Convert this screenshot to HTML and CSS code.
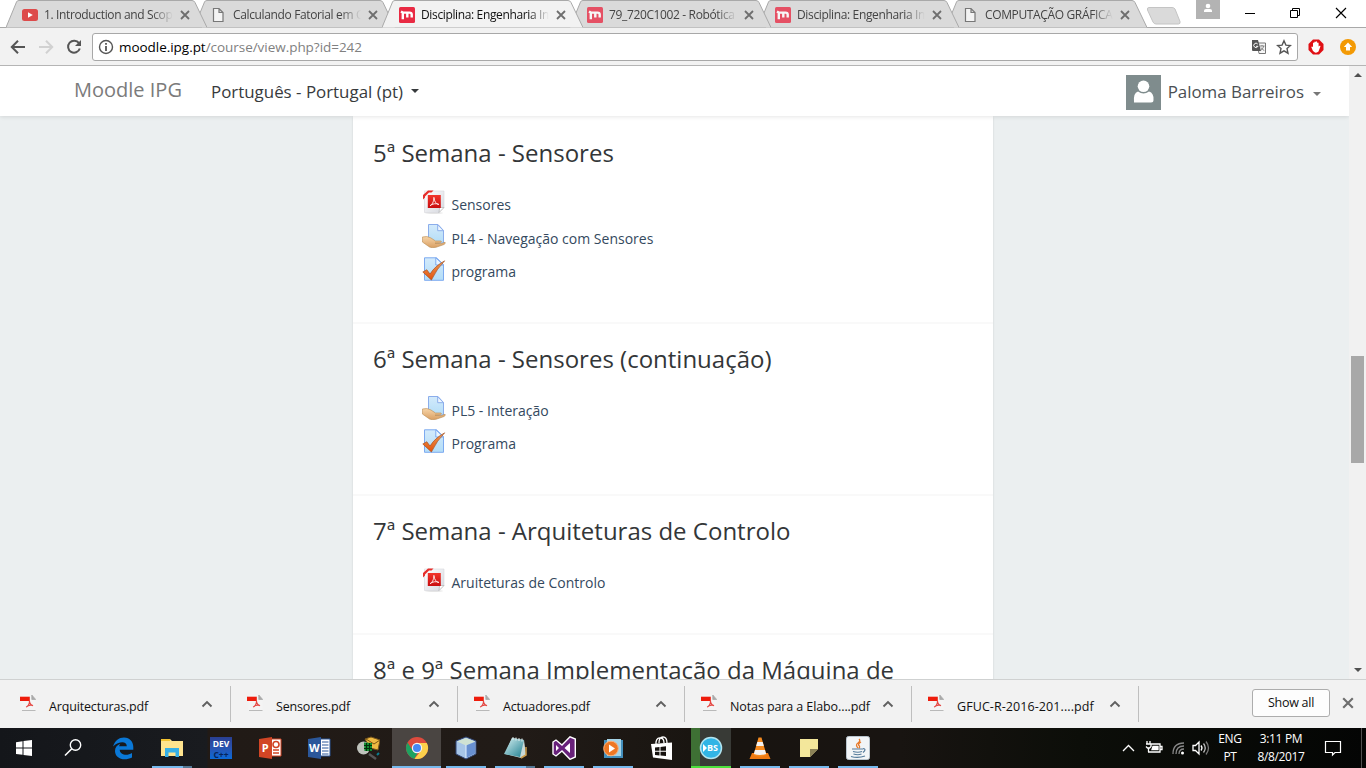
FILE: index.html
```html
<!DOCTYPE html>
<html lang="pt">
<head>
<meta charset="utf-8">
<title>Disciplina: Engenharia</title>
<link rel="stylesheet" href="styles.css">
</head>
<body>
<svg class="defs" width="0" height="0">
  <defs>
    <linearGradient id="paper" x1="0" y1="0" x2="1" y2="1"><stop offset="0" stop-color="#fff"/><stop offset="1" stop-color="#d6d8df"/></linearGradient>
    <linearGradient id="blue" x1="0" y1="0" x2="0" y2="1"><stop offset="0" stop-color="#d3eafb"/><stop offset="1" stop-color="#b3ddf7"/></linearGradient>
    <linearGradient id="skin" x1="0" y1="0" x2="0" y2="1"><stop offset="0" stop-color="#f7d5a8"/><stop offset="1" stop-color="#d99f63"/></linearGradient>
    <linearGradient id="red" x1="0" y1="0" x2="0" y2="1"><stop offset="0" stop-color="#f2352b"/><stop offset="1" stop-color="#c80d10"/></linearGradient>
    <linearGradient id="orange" x1="0" y1="0" x2="0" y2="1"><stop offset="0" stop-color="#ed9a55"/><stop offset="1" stop-color="#e2520c"/></linearGradient>
    <linearGradient id="glass" x1="0" y1="0" x2="1" y2="1"><stop offset="0" stop-color="#d9f2f3"/><stop offset="1" stop-color="#1e7f90"/></linearGradient>
    <linearGradient id="devbg" x1="0" y1="0" x2="0" y2="1"><stop offset="0" stop-color="#2a3f92"/><stop offset=".5" stop-color="#2a53b0"/><stop offset="1" stop-color="#0b6ad8"/></linearGradient>
  </defs>
  <symbol id="tab" viewBox="0 0 201 28"><path d="M0 27.500L10.500 2Q11 .5 13 .5H186Q188 .5 189 2.500L201 27.500" stroke="#a9a9a9"/></symbol>
  <symbol id="x" viewBox="0 0 10 10"><path d="M1 1L9 9M9 1L1 9" fill="none" stroke="#6e6e6e" stroke-width="1.8"/></symbol>
  <symbol id="yt" viewBox="0 0 16 16"><rect y="2" width="16" height="12" rx="2.5" fill="#dd4b4b"/><path d="M6 5.3L10.8 8L6 10.7z" fill="#fff"/></symbol>
  <symbol id="page" viewBox="0 0 16 16"><path d="M3.5 1.5H9L13 5.5V14.5H3.5zM9 1.5V5.5H13" fill="#f3f3f3" stroke="#777" stroke-width="1.2"/></symbol>
  <symbol id="m" viewBox="0 0 16 16"><rect width="16" height="16" rx="1.5" fill="#e92a43"/><path d="M3.8 12.300V5.600H10.500Q12.700 5.600 12.700 7.600V10.600M8.300 6V10.600M3.800 5.600L2 4.500" fill="none" stroke="#fff" stroke-width="2.400"/></symbol>
  <symbol id="pdf" viewBox="0 0 24 24"><ellipse cx="12" cy="23" rx="9" ry=".8" fill="#ddd"/><path d="M2.5 1H22V17.5L17 22.5H2.5z" fill="url(#paper)" stroke="#d6d6dc" stroke-width=".6"/><path d="M22 17.5H18.5Q17.5 17.5 17.5 18.5L17 22.5z" fill="#fff" stroke="#aaa" stroke-width=".6"/><path d="M1 9.5V5L6 .5H11.5L9.5 2.5H7L3 6.5V7.5z" fill="#e62e2b"/><rect x="5.8" y="5" width="13" height="13" fill="url(#red)"/><path d="M8 15.7C10 15 12 11.5 11.9 7.4C12.4 11.7 14 14.1 17 14.5C14.2 13 10.3 13.7 8 15.7z" fill="none" stroke="#ffe5e5"/></symbol>
  <symbol id="assign" viewBox="0 0 24 24"><path d="M6.500 .5H16L21.500 6.500V19H6.500z" fill="url(#blue)" stroke="#8badeb"/><path d="M15.7 .8V6.7H21.5z" fill="#f0f8ff" stroke="#8badeb"/><path d="M.4 13Q5 11.5 9 14L13.5 17H19Q20 18 18.5 18.8L13 19.2L19 19.7L23 18.3Q24 19.2 22 20.5L14 23.3Q10 24.3 7.5 23L.4 18z" fill="url(#skin)" stroke="#b8894f" stroke-width=".6"/></symbol>
  <symbol id="check" viewBox="0 0 24 24"><path d="M2.5 .8H14.5L21.5 7.5V23.3H2.5z" fill="url(#blue)" stroke="#7daaf0"/><path d="M13.8 .8V8H21.5z" fill="#e9f5ff" stroke="#7daaf0"/><path d="M.8 15L4.8 12.7L8 17Q13 9 22.7 3.8Q15 11.5 9.4 23z" fill="url(#orange)" stroke="#9e430f" stroke-width=".6"/></symbol>
  <symbol id="dlpdf" viewBox="0 0 16 16"><path d="M1.5 0H11.5L15.5 4V15.5H1.5z" fill="#f4f4f4"/><path d="M2 15.5H15.5M11.8 0V4.5H15.7z" fill="#aaa" stroke="#aaa" stroke-width=".8"/><path d="M0 1.7H9.8V6H0z" fill="#ee1c0c"/><path d="M6.2 12.1C8.3 11.3 9.8 8.2 9.4 5.6C9.6 8 11 10.2 13 10.6C11 9.8 8 10.2 6.2 12.1z" fill="none" stroke="#e44743" stroke-width="1.1"/></symbol>
  <symbol id="up" viewBox="0 0 12 8"><path d="M1.5 6.5L6 2L10.5 6.5" fill="none" stroke="#606060" stroke-width="1.9"/></symbol>
</svg>
<div class="screen">
  <header class="tabs">
    <div class="tab z6"><svg class="shape"><use href="#tab"/></svg><svg class="fav"><use href="#yt"/></svg><span class="title t1">1. Introduction and Scope</span><svg class="close"><use href="#x"/></svg></div>
    <div class="tab z5"><svg class="shape"><use href="#tab"/></svg><svg class="fav"><use href="#page"/></svg><span class="title">Calculando Fatorial em C</span><svg class="close"><use href="#x"/></svg></div>
    <div class="tab active"><svg class="shape"><use href="#tab"/></svg><svg class="fav mfav"><use href="#m"/></svg><span class="title">Disciplina: Engenharia Inf</span><svg class="close"><use href="#x"/></svg></div>
    <div class="tab z4"><svg class="shape"><use href="#tab"/></svg><svg class="fav mfav pale"><use href="#m"/></svg><span class="title">79_720C1002 - Robótica</span><svg class="close"><use href="#x"/></svg></div>
    <div class="tab z3"><svg class="shape"><use href="#tab"/></svg><svg class="fav mfav pale"><use href="#m"/></svg><span class="title">Disciplina: Engenharia Inf</span><svg class="close"><use href="#x"/></svg></div>
    <div class="tab z2"><svg class="shape"><use href="#tab"/></svg><svg class="fav"><use href="#page"/></svg><span class="title">COMPUTAÇÃO GRÁFICA</span><svg class="close"><use href="#x"/></svg></div>
    <svg class="newtab" viewBox="0 0 36 20"><path d="M3 .5H26Q28 .5 29 2L34 14.500Q34.500 17 32.500 17H10Q8 17 7 15L1.500 3Q.8.5 3 .5z" fill="#dadada" stroke="#c4c4c4"/></svg>
    <svg class="wincontrols" viewBox="0 0 170 28"><path d="M0 0H24V19H0z" fill="#b3b3b3"/><circle cx="12" cy="6" r="2.300" fill="#fff"/><path d="M8 12V10.500Q8 9 10 9H14Q16 9 16 10.500V12z" fill="#fff"/><g fill="none" stroke="#000"><path d="M49 13.500H59M94.500 10.500H101.500V17.500H94.500zM96.500 10V8.500H103.500V15.500H102"/><path d="M140 8L150 18M150 8L140 18" stroke-width="1.150"/></g></svg>
  </header>
  <div class="toolbar">
    <svg class="navicons" viewBox="0 0 92 37"><g fill="none" stroke="#555" stroke-width="2"><path d="M25 19H12.500M18 12.800L11.800 19L18 25.200"/><path stroke="#d1d1d1" d="M39 19H51.500M46 12.800L52.200 19L46 25.200"/><path d="M79 15.200A6 6 0 1 0 79.800 20.500"/></g><path d="M81 12V18H75z" fill="#555"/></svg>
    <div class="omnibox">
      <svg class="info" viewBox="0 0 16 16"><circle cx="8" cy="8" r="6.500" fill="none" stroke="#555" stroke-width="1.400"/><path d="M8 7V12M8 4V5.800" stroke="#555" stroke-width="1.800"/></svg>
      <span class="url"><b>moodle.ipg.pt</b>/course/view.php?id=242</span>
      <svg class="translate" viewBox="0 0 16 16"><path d="M6 4H14.500V14.500H8z" fill="#f8f8f8" stroke="#777"/><path d="M1 1H7L10 12H2Q1 12 1 11z" fill="#555"/><path d="M6.700 5A2.200 2.200 0 1 0 7 7.300H5" fill="none" stroke="#fff"/><path d="M9 7H13.500M11 6V7M12.800 7Q12 10 9.700 11.500M10 8.500Q11.500 11 13.300 11.500" fill="none" stroke="#777" stroke-width=".9"/></svg>
      <svg class="star" viewBox="0 0 16 16"><path d="M8 1.800L9.900 6.100L14.500 6.500L11 9.600L12 14.200L8 11.800L4 14.200L5 9.600L1.500 6.500L6.100 6.100z" fill="none" stroke="#555" stroke-width="1.400"/></svg>
    </div>
    <svg class="ext1" viewBox="0 0 16 16"><path d="M5 .5H11L15.500 5V11L11 15.500H5L.5 11V5z" fill="#e00f14"/><path d="M5 12L3.400 8.500Q3.400 7 5 8V4Q5.700 3 6.300 4V3Q7 2 7.700 3V2.700Q8.500 1.700 9.200 3V4Q10.300 3 10.600 4.300V7.500L12 6.500Q13 7 12 8.500L10.500 12.500Q9 14 7 13.500z" fill="#fff"/></svg>
    <svg class="ext2" viewBox="0 0 16 16"><circle cx="8" cy="8" r="8" fill="#f39a05"/><path d="M8 3.500L12.200 8H10V11.500H6V8H3.800z" fill="#fff"/></svg>
  </div>
  <div class="viewport">
    <main class="site">
      <nav class="navbar">
        <span class="brand">Moodle IPG</span><span class="lang">Português - Portugal (pt)</span><i class="caret"></i>
        <div class="user"><svg class="avatar" viewBox="0 0 35 35"><rect width="35" height="35" fill="#7f8c8d"/><circle cx="17.500" cy="11.300" r="5.800" fill="#fff"/><path d="M8 27.500Q7 18 12 16.500Q17.500 20.500 23 16.500Q28 18 27.500 25Q27.500 27.500 25 27.500z" fill="#fff"/></svg><span class="username">Paloma Barreiros</span><i class="caret grey"></i></div>
      </nav>
      <div class="course">
        <section><h3>5ª Semana - Sensores</h3><ul>
          <li><svg><use href="#pdf"/></svg><a>Sensores</a></li>
          <li><svg><use href="#assign"/></svg><a>PL4 - Navegação com Sensores</a></li>
          <li><svg><use href="#check"/></svg><a>programa</a></li></ul></section>
        <section><h3>6ª Semana - Sensores (continuação)</h3><ul>
          <li><svg><use href="#assign"/></svg><a>PL5 - Interação</a></li>
          <li><svg><use href="#check"/></svg><a>Programa</a></li></ul></section>
        <section><h3>7ª Semana - Arquiteturas de Controlo</h3><ul>
          <li><svg><use href="#pdf"/></svg><a>Aruiteturas de Controlo</a></li></ul></section>
        <section><h3>8ª e 9ª Semana Implementação da Máquina de</h3></section>
      </div>
    </main>
    <div class="scrollbar"><i class="arrow upw"></i><i class="thumb"></i><i class="arrow down"></i></div>
  </div>
  <div class="downloads">
    <div class="dl"><svg class="file"><use href="#dlpdf"/></svg><span>Arquitecturas.pdf</span><svg class="chev"><use href="#up"/></svg></div>
    <div class="dl"><svg class="file"><use href="#dlpdf"/></svg><span>Sensores.pdf</span><svg class="chev"><use href="#up"/></svg></div>
    <div class="dl"><svg class="file"><use href="#dlpdf"/></svg><span>Actuadores.pdf</span><svg class="chev"><use href="#up"/></svg></div>
    <div class="dl"><svg class="file"><use href="#dlpdf"/></svg><span class="d4">Notas para a Elabo....pdf</span><svg class="chev"><use href="#up"/></svg></div>
    <div class="dl"><svg class="file"><use href="#dlpdf"/></svg><span class="d5">GFUC-R-2016-201....pdf</span><svg class="chev"><use href="#up"/></svg></div>
    <button class="showall">Show all</button><svg class="dlclose" viewBox="0 0 10 10"><use href="#x"/></svg>
  </div>
  <footer class="taskbar">
    <div class="app"><svg class="nudge" viewBox="0 0 24 24"><path d="M4 6.200L10.500 5.300V11.500H4zM11.500 5.100L20 4V11.500H11.500zM4 12.500H10.500V18.800L4 17.900zM11.500 12.500H20V20L11.500 19z" fill="#fff"/></svg></div>
    <div class="app"><svg class="nudge" viewBox="0 0 24 24"><circle cx="14.500" cy="9" r="5.200" fill="none" stroke="#fff" stroke-width="1.400"/><path d="M10.800 12.700L4 19.500" stroke="#fff" stroke-width="1.600"/></svg></div>
    <div class="app"><svg viewBox="0 0 24 24"><path d="M2 10.500C4 4.500 8 1.500 13 1.500C19 1.500 22.300 6 22.300 11V13.800H8.700C9 19 16 20.300 21 17V21.500C13 25.500 4 22.500 4 15C4 11.500 6 9 9.300 7.700C8.500 8.700 8.300 9.600 8.200 10.200H15.800C15.800 5 8 5 2 10.500z" fill="#0a78d7"/></svg></div>
    <div class="app run split"><svg viewBox="0 0 24 24"><path d="M1 3H10L12 5H23V20H1z" fill="#ffe48e"/><path d="M1 3H10V5H1z" fill="#f3c331"/><path d="M5 21V12H19V21H15.500V16.500H8.500V21z" fill="#37b0e6"/></svg></div>
    <div class="app"><svg viewBox="0 0 24 24"><rect x="1" y="1" width="22" height="22" fill="url(#devbg)"/><text x="12" y="10.500" class="devtxt" fill="#fff">DEV</text><text x="12" y="21.500" class="devtxt" fill="#06245b">C++</text></svg></div>
    <div class="app"><svg viewBox="0 0 24 24"><path d="M13 3H23V20H13z" fill="#fff" stroke="#d14525"/><path d="M15 14H21M15 17H21" stroke="#d14525" stroke-width="1.500"/><circle cx="18" cy="8.500" r="3" fill="none" stroke="#d14525" stroke-width="1.600"/><path d="M1 3L14 1V23L1 21z" fill="#d14525"/><text x="7.300" y="16" class="officetxt">P</text></svg></div>
    <div class="app"><svg viewBox="0 0 24 24"><path d="M13 3H23V20H13z" fill="#fff" stroke="#2b579a"/><path d="M15 6H21.500M15 9H21.500M15 12H21.500M15 15H21.500M15 18H21.500" stroke="#2b579a"/><path d="M1 3L14 1V23L1 21z" fill="#2b579a"/><text x="7.300" y="16" class="officetxt">W</text></svg></div>
    <div class="app"><svg viewBox="0 0 24 24"><path d="M9 3L15 1L24 4L22 14L14 12z" fill="#efb942" stroke="#75541a"/><path d="M10 3L18 8L24 4" fill="none" stroke="#7a5412"/><circle cx="7.500" cy="12" r="6.500" fill="#bfc2bc"/><path d="M8 6.500L16 7V15H8.500z" fill="#118b30"/><path d="M10.500 7V15M13.500 7V15M8 9.500H16M8 12.500H16" stroke="#042e0a"/><path d="M13 18L20 23" stroke="#555" stroke-width="2.500"/><path d="M21 19L23 17" stroke="#0b7e91" stroke-width="2"/></svg></div>
    <div class="app current"><svg viewBox="0 0 24 24"><circle cx="12" cy="12" r="11" fill="#dd4b3e"/><path d="M2.500 6.500L8 15Q10 17 12.500 17L9.500 22.700A11 11 0 0 1 2.500 6.500z" fill="#1da261"/><path d="M12 7H21.800A11 11 0 0 1 9.500 22.700L16.300 14.500z" fill="#fcd04b"/><circle cx="12" cy="12" r="5.200" fill="#f5f5f5"/><circle cx="12" cy="12" r="4" fill="#4688f4"/></svg></div>
    <div class="app run"><svg viewBox="0 0 24 24"><path d="M2 5L12 1L22 5V18L12 23L2 18z" fill="#a7c5e7" stroke="#314574"/><path d="M3 5.500L12 9.500L21 5.500L12 2z" fill="#d0e2d3"/><path d="M12 9.500V22L21 17.500V6z" fill="#6890d0"/><path d="M12 9V22" stroke="#e0efff"/></svg></div>
    <div class="app run split"><svg viewBox="0 0 24 24"><path d="M9 2L21 4L23 19L18 22L2 18z" fill="#c8d9d8"/><path d="M9 2L21 4L17 21L1 18z" fill="url(#glass)"/><path d="M10 1V4M13 1.500V4.500M16 2V5M19 2.500V5.500" stroke="#e4eeee"/><path d="M23 11V19L18 22" stroke="#cc9d4b" stroke-width="1.500" fill="none"/></svg></div>
    <div class="app run"><svg viewBox="0 0 24 24"><path d="M1 6L4 4L10 9L18 .8L23.300 3V21L18 23.300L10 15L4 20L1 18z" fill="#68217a" stroke="#fff" stroke-width="1.400"/><path d="M4 9V15L7 12zM18 7L12.500 12L18 17z" fill="#fff"/></svg></div>
    <div class="app run"><svg viewBox="0 0 24 24"><path d="M3 4H22V22H3z" fill="#438fbc"/><path d="M6 3H20V20H6z" fill="#a5d3e6"/><circle cx="10" cy="12.500" r="7.300" fill="#ee7723" stroke="#f6b27f"/><path d="M8 8.500L14 12.500L8 16.500z" fill="#fff"/></svg></div>
    <div class="app"><svg viewBox="0 0 24 24"><path d="M1 8L22 6.500V24L3 21.500z" fill="#fff"/><path d="M6 9V6Q7 1 11 2Q14 2.500 14 7M9 7Q9 .8 13 .8Q17 1 17 7" fill="none" stroke="#fff" stroke-width="1.300"/><path d="M5 11.500L9.500 11V14.800H5zM10.500 10.900L16 10.300V14.800H10.500zM5 15.800H9.500V19.400L5 19zM10.500 15.800H16V20L10.500 19.500z" fill="#16120f"/></svg></div>
    <div class="app green"><svg viewBox="0 0 24 24"><circle cx="12" cy="12" r="10.500" fill="#31b4e5" stroke="#b1e3ef" stroke-width="1.500"/><path d="M4 8L8 12L4 16" fill="#fff"/><text x="13.500" y="15.300" class="bstxt">BS</text></svg></div>
    <div class="app run"><svg viewBox="0 0 24 24"><path d="M4 17H20L22.500 23H1.500z" fill="#ee7911"/><path d="M10.500 1.500H13.500L18.500 19Q12 22 5.500 19z" fill="#f58b20"/><path d="M9.300 6H14.700L15.800 10H8.200zM7 14H17L18.100 18Q12 20 5.900 18z" fill="#f2f2f2"/></svg></div>
    <div class="app run"><svg viewBox="0 0 24 24"><path d="M3 3H21V13L13 21H3z" fill="#f3e79b"/><path d="M13 13H21L13 21z" fill="#8b8257"/></svg></div>
    <div class="app run"><svg viewBox="0 0 24 24"><rect x=".5" y=".5" width="23" height="23" rx="2" fill="#f2f5f7" stroke="#b9c5ce"/><path d="M13 3Q15 5 12 7Q9 9 12 12M15 6Q11 8.500 13.500 10Q14 11 13 12.500" fill="none" stroke="#e7792a" stroke-width="1.300"/><path d="M6 13H17M7 15.500Q12 17 16 15.500M7.500 18Q12 19.500 15.500 18M5 20.500Q12 22.500 19 20M17 12.500Q21 13 17 16.500" fill="none" stroke="#547b9b" stroke-width="1.200"/></svg></div>
    <div class="tray">
      <svg class="trayicons" viewBox="0 0 88 24"><g fill="none" stroke="#fff" stroke-width="1.300"><path d="M1 15L6.500 9.500L12 15"/><path d="M28 8H38V16H26M38.500 10.500H40V13.500H38.500M25 5V8M28 5V8M24 8H29V10.500L27.500 12H25.500L24 10.500M26.500 12V16"/><path d="M31 10.500H36V13.500H30z" fill="#fff"/><path stroke="#888" d="M51 18Q51 7 62 7M54 18Q54 10 62 10M57 18Q57 13 62 13"/><path d="M71 9.500H73.500L77 6V18L73.500 14.500H71zM79 9.500Q81 12 79 14.500"/><path d="M81.500 7.500Q85 12 81.500 16.500" stroke="#bbb"/><path d="M84 5.500Q89 12 84 18.500" stroke="#777"/></g><circle cx="60.500" cy="17" r="1.500" fill="#fff"/></svg>
      <div class="lang2">ENG<br>PT</div>
      <div class="clock">3:11 PM<br>8/8/2017</div>
      <svg class="note" viewBox="0 0 18 18"><path d="M1.500 2.500H16.500V13.500H11L8.500 16V13.500H1.500z" fill="none" stroke="#fff" stroke-width="1.200"/></svg>
    </div>
  </footer>
</div>
</body>
</html>
```
FILE: styles.css
```css
* { box-sizing: border-box; }
body { margin: 0; overflow: hidden; font-family: "Open Sans", "Noto Sans", sans-serif; }
.defs { position: absolute; }
.screen { width: 1366px; height: 768px; display: flex; flex-direction: column; background: #fff; }
svg { flex: none; display: block; }

.tabs { height: 28px; flex: none; display: flex; padding-left: 6px; background: #fff; box-shadow: inset 0 -1px #a9a9a9; isolation: isolate; }
.tab { position: relative; width: 201px; height: 28px; margin-right: -13px; padding: 2px 0 0 16px; display: flex; align-items: center; flex: none; border-bottom: 1px solid #a9a9a9; border-image: linear-gradient(90deg, transparent 6px, #a9a9a9 6px, #a9a9a9 195px, transparent 195px) 1; }
.shape { position: absolute; left: 0; top: 0; width: 201px; height: 28px; fill: #dadada; z-index: -1; }
.z6 { z-index: 6; }
.z5 { z-index: 5; }
.z4 { z-index: 4; }
.z3 { z-index: 3; }
.z2 { z-index: 2; }
.active { z-index: 9; border-bottom-color: transparent; border-image: none; }
.active .shape { fill: #f2f2f2; }
.fav { position: relative; width: 16px; height: 16px; margin-right: 7px; }
.mfav { margin: 0 6px 0 1px; }
.pale { opacity: .78; }
.title { width: 128px; overflow: hidden; white-space: nowrap; font-size: 12px; line-height: 18px; letter-spacing: -.36px; color: #444; -webkit-mask-image: linear-gradient(90deg, #000 84%, transparent); mask-image: linear-gradient(90deg, #000 84%, transparent); }
.t1 { margin-left: -1px; width: 129px; }
.active .title { color: #111; }
.close { width: 10px; height: 10px; margin-left: 7px; }
.newtab { width: 36px; height: 20px; margin: 7px 0 0 12px; }
.wincontrols { width: 170px; height: 28px; margin-left: 14px; }

.toolbar { height: 38px; flex: none; display: flex; align-items: flex-start; background: #f2f2f2; border-bottom: 1px solid #b5b5b5; }
.navicons { width: 92px; height: 37px; }
.omnibox { width: 1206px; height: 28px; margin-top: 5px; padding: 0 5px; display: flex; align-items: center; background: #fff; border: 1px solid #a8a8a8; border-radius: 3px; }
.info { width: 16px; height: 16px; margin-right: 5px; }
.url { flex: 1; font-size: 13.5px; line-height: 26px; letter-spacing: -.04px; color: #808080; }
.url b { font-weight: 400; color: #000; }
.translate { width: 16px; height: 16px; margin-right: 9px; }
.star { width: 16px; height: 16px; }
.ext1 { width: 16px; height: 16px; margin: 11px 16px 0 10px; }
.ext2 { width: 16px; height: 16px; margin-top: 11px; }

.viewport { height: 613px; flex: none; display: flex; overflow: hidden; }
.site { width: 1349px; height: 613px; overflow: hidden; background: #ebeff0; }
.navbar { position: relative; height: 50px; display: flex; align-items: center; padding: 0 28px 0 74px; background: #fff; box-shadow: 0 1px 4px rgba(0,0,0,.1); }
.brand { width: 137px; font-size: 20px; line-height: 48px; margin-top: -3px; color: #7b7b7b; }
.lang { font-size: 16.9px; color: #373a3c; }
.caret { margin-left: 8px; border: 4px solid transparent; border-top-color: #373a3c; border-bottom: 0; }
.grey { border-top-color: #777; margin: 3px 0 0 9px; }
.user { display: flex; align-items: center; margin-left: auto; padding-top: 3px; }
.avatar { width: 35px; height: 35px; margin-right: 7px; }
.username { font-size: 16.9px; margin-top: -2px; color: #4b4f53; }
.course { width: 640px; margin-left: 353px; padding-top: 2.3px; background: #fff; box-shadow: 0 1px 2px rgba(0,0,0,.12); }
section { padding: 18px 20px 34.5px; border-bottom: 2px solid #f9f9f9; }
h3 { margin: 0 0 17.3px; font-size: 24px; font-weight: 400; line-height: 34px; color: #333638; white-space: nowrap; }
ul { margin: 0; padding: 0 0 0 49px; list-style: none; }
li { height: 33.3px; display: flex; align-items: center; }
li svg { width: 24px; height: 24px; margin: -4px 5.5px 0 0; }
li a { font-size: 14px; line-height: 20px; padding-top: 2px; color: #34495e; }
.scrollbar { width: 17px; height: 613px; background: #f1f1f1; display: flex; flex-direction: column; align-items: center; }
.arrow { border: 4px solid transparent; }
.upw { border-top: 0; border-bottom-color: #505050; margin-top: 7px; }
.thumb { width: 13px; height: 107px; margin-top: 279px; background: #a8a8a8; }
.down { border-bottom: 0; border-top-color: #505050; margin: auto 0 7px; }

.downloads { height: 49px; flex: none; display: flex; align-items: center; padding-left: 4px; background: #f2f2f2; border-top: 1px solid #cfd1d1; }
.dl { width: 227px; height: 36px; flex: none; display: flex; align-items: center; padding-left: 16px; border-right: 1px solid #bfbfbf; font-size: 12.5px; color: #111; }
.dl span { width: 150px; white-space: nowrap; padding-top: 4px; letter-spacing: -.16px; }
.dl .d4 { letter-spacing: -.1px; }
.dl .d5 { letter-spacing: .08px; }
.file { width: 16px; height: 16px; margin: -2px 13px 0 0; }
.chev { width: 12px; height: 8px; margin-left: 2px; }
.showall { width: 78px; height: 28px; margin: -2px 12px 0 113px; padding: 0 0 1px; background: #fdfdfd; border: 1px solid #adadad; border-radius: 3px; font: 12.5px "Open Sans", sans-serif; letter-spacing: -.25px; color: #111; }
.dlclose { width: 12px; height: 12px; margin-top: -2px; }

.taskbar { height: 40px; flex: none; display: flex; background: linear-gradient(90deg, #14161a 0, #191b1f 207px, #211a16 208px, #211b17 520px, #181410 720px, #181411 900px, #0c0e09 1080px, #040504 100%); }
.app { width: 49px; height: 40px; flex: none; display: flex; align-items: center; justify-content: center; }
.app svg { width: 24px; height: 24px; }
.app .nudge { margin-right: 2px; }
.run { background: linear-gradient(#76b9ed, #76b9ed) 5px 38px / 40px 2px no-repeat; }
.split { background: linear-gradient(90deg, #76b9ed 31px, #547895 31px) 5px 38px / 40px 2px no-repeat; }
.current { background: #4a4542; border-bottom: 2px solid #76b9ed; }
.current svg { margin-top: 2px; }
.green { background: linear-gradient(#4ce13c, #4ce13c) 5px 38px / 40px 2px no-repeat, linear-gradient(90deg, #3e7034 9px, #383a36 9px) 5px 0 / 40px 38px no-repeat; }
.devtxt { font: bold 8.5px/1 "Open Sans"; text-anchor: middle; }
.officetxt { font: bold 11px "Open Sans"; fill: #fff; text-anchor: middle; }
.bstxt { font: bold 9px "Open Sans"; fill: #fff; text-anchor: middle; }
.tray { flex: 1; display: flex; align-items: center; padding-left: 240px; margin-right: 4px; border-right: 1px solid #4f4f4f; color: #fff; font-size: 12px; line-height: 18px; text-align: center; letter-spacing: -.35px; }
.trayicons { width: 88px; height: 24px; }
.lang2 { width: 32px; margin-left: 4px; }
.clock { width: 64px; margin-left: 3px; }
.note { width: 18px; height: 18px; margin-left: 11px; }
```
